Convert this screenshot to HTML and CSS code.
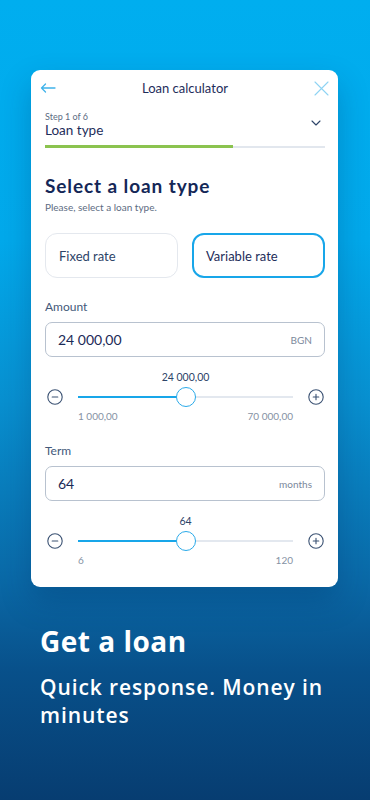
FILE: index.html
```html
<!DOCTYPE html>
<html lang="en">
<head>
    <meta charset="UTF-8">
    <meta name="viewport" content="width=device-width, initial-scale=1.0">
    <title>Loan calculator</title>
    <link rel="stylesheet" href="styles.css">
</head>
<body>
    <div class="card">
        <div class="topbar">
            <svg class="back" width="16" height="10" viewBox="0 0 16 10">
                <path d="M15 5H1.5M5.5 1L1.5 5l4 4" fill="none" stroke="#3fb3ea" stroke-width="1.3" stroke-linecap="round" stroke-linejoin="round"/>
            </svg>
            <span class="title">Loan calculator</span>
            <svg class="close" width="15" height="15" viewBox="0 0 15 15">
                <path d="M1 1l13 13M14 1L1 14" stroke="#8ed3f3" stroke-width="1.1" stroke-linecap="round"/>
            </svg>
        </div>

        <div class="step">
            <div>
                <div class="step-no">Step 1 of 6</div>
                <div class="step-name">Loan type</div>
            </div>
            <svg class="chevron" width="10" height="6" viewBox="0 0 10 6">
                <path d="M1 1l4 4 4-4" fill="none" stroke="#2d4468" stroke-width="1.1" stroke-linecap="round" stroke-linejoin="round"/>
            </svg>
        </div>
        <div class="progress"><div class="progress-fill" style="width: 67%"></div></div>

        <h2 class="heading">Select a loan type</h2>
        <p class="hint">Please, select a loan type.</p>

        <div class="types">
            <div class="type">Fixed rate</div>
            <div class="type active">Variable rate</div>
        </div>

        <div class="field">
            <div class="label">Amount</div>
            <div class="input"><span class="value">24 000,00</span><span class="unit">BGN</span></div>
            <div class="slider">
                <div class="current">24 000,00</div>
                <svg class="minus" width="16" height="16" viewBox="0 0 16 16">
                    <circle cx="8" cy="8" r="7.2" fill="none" stroke="#3b5273" stroke-width="1.1"/>
                    <path d="M5.2 8h5.6" stroke="#3b5273" stroke-width="1.1" stroke-linecap="round"/>
                </svg>
                <div class="track"><div class="fill" style="width: 50%"><span class="thumb"></span></div></div>
                <svg class="plus" width="16" height="16" viewBox="0 0 16 16">
                    <circle cx="8" cy="8" r="7.2" fill="none" stroke="#3b5273" stroke-width="1.1"/>
                    <path d="M5.2 8h5.6M8 5.2v5.6" stroke="#3b5273" stroke-width="1.1" stroke-linecap="round"/>
                </svg>
                <div class="limits"><span>1 000,00</span><span>70 000,00</span></div>
            </div>
        </div>

        <div class="field">
            <div class="label">Term</div>
            <div class="input"><span class="value">64</span><span class="unit">months</span></div>
            <div class="slider">
                <div class="current">64</div>
                <svg class="minus" width="16" height="16" viewBox="0 0 16 16">
                    <circle cx="8" cy="8" r="7.2" fill="none" stroke="#3b5273" stroke-width="1.1"/>
                    <path d="M5.2 8h5.6" stroke="#3b5273" stroke-width="1.1" stroke-linecap="round"/>
                </svg>
                <div class="track"><div class="fill" style="width: 50%"><span class="thumb"></span></div></div>
                <svg class="plus" width="16" height="16" viewBox="0 0 16 16">
                    <circle cx="8" cy="8" r="7.2" fill="none" stroke="#3b5273" stroke-width="1.1"/>
                    <path d="M5.2 8h5.6M8 5.2v5.6" stroke="#3b5273" stroke-width="1.1" stroke-linecap="round"/>
                </svg>
                <div class="limits"><span>6</span><span>120</span></div>
            </div>
        </div>
    </div>

    <div class="promo">
        <h1>Get a loan</h1>
        <p>Quick response. Money in minutes</p>
    </div>
</body>
</html>
```

FILE: styles.css
```css
html, body, h1, h2, p {
    margin: 0;
    padding: 0;
}
html, body {
    width: 100%;
    height: 100%;
}
body {
    font-family: Lato, "Open Sans", sans-serif;
    background: linear-gradient(180deg, #00aeef 0%, #02a9eb 30%, #0890d0 50%, #0a6aa8 72%, #08508a 84%, #073d71 100%);
    padding-top: 70px;
    box-sizing: border-box;
    color: #1b2a57;
}
.card {
    margin: 0 32px 0 31px;
    background: #fff;
    border-radius: 9px;
    padding: 0 13px 20px 14px;
    box-shadow: 0 14px 30px rgba(0, 40, 90, 0.25);
}
.topbar {
    display: flex;
    align-items: center;
    justify-content: space-between;
    height: 36px;
    margin: 0 -4px 0 -5px;
}
.title {
    font-size: 13px;
    color: #1e2d5a;
}
.step {
    display: flex;
    align-items: center;
    justify-content: space-between;
    margin-top: 5px;
    padding-right: 4px;
}
.step-no {
    font-size: 9px;
    line-height: 11px;
    color: #5d6c82;
}
.step-name {
    font-size: 13.5px;
    line-height: 16px;
    color: #1e2d5a;
}
.chevron {
    margin-top: -3px;
}
.progress {
    margin-top: 7px;
    height: 3px;
    background: linear-gradient(180deg, #fff 0, #fff 1px, #e2e7ee 1px);
}
.progress-fill {
    height: 3px;
    background: #8bc34f;
}
.heading {
    margin-top: 26px;
    font-size: 19px;
    line-height: 24px;
    font-weight: 700;
    letter-spacing: 0.9px;
    color: #142757;
}
.hint {
    margin-top: 3px;
    font-size: 10px;
    line-height: 13px;
    color: #5d6c82;
}
.types {
    display: grid;
    grid-template-columns: 1fr 1fr;
    column-gap: 14px;
    margin-top: 19px;
}
.type {
    box-sizing: border-box;
    height: 45px;
    display: flex;
    align-items: center;
    padding-left: 13px;
    border: 1px solid #e4e8ee;
    border-radius: 12px;
    font-size: 13px;
    color: #2d4468;
}
.type.active {
    border: 2px solid #18a6e9;
    padding-left: 12px;
    color: #1e2d5a;
}
.field {
    margin-top: 21px;
}
.field + .field {
    margin-top: 20px;
}
.label {
    font-size: 12px;
    line-height: 16px;
    color: #43597a;
}
.input {
    box-sizing: border-box;
    height: 35px;
    margin-top: 7px;
    display: flex;
    align-items: center;
    justify-content: space-between;
    padding: 0 12px;
    border: 1px solid #b8c2cf;
    border-radius: 7px;
}
.value {
    font-size: 14px;
    color: #1b2a57;
}
.unit {
    font-size: 10px;
    color: #7b889b;
}
.slider {
    display: grid;
    grid-template-columns: 16px 1fr 16px;
    column-gap: 15px;
    align-items: center;
    margin-top: 13px;
    padding: 0 1px 0 2px;
}
.current {
    grid-row: 1;
    grid-column: 2;
    text-align: center;
    font-size: 10.5px;
    line-height: 14px;
    color: #2d4468;
    margin-bottom: 3px;
}
.minus {
    grid-row: 2;
    grid-column: 1;
}
.track {
    grid-row: 2;
    grid-column: 2;
    height: 2px;
    background: #e3e8ef;
    margin: 9px 0;
}
.plus {
    grid-row: 2;
    grid-column: 3;
}
.fill {
    position: relative;
    height: 2px;
    background: #18a6e9;
}
.thumb {
    position: absolute;
    right: -10px;
    top: -9px;
    width: 20px;
    height: 20px;
    box-sizing: border-box;
    border: 1.3px solid #2aaae9;
    border-radius: 50%;
    background: #fff;
}
.limits {
    grid-row: 3;
    grid-column: 2;
    display: flex;
    justify-content: space-between;
    margin-top: 2px;
    font-size: 10px;
    line-height: 14px;
    color: #8692a4;
}
.promo {
    padding: 36px 40px 0;
    color: #fff;
    font-family: "Open Sans", Lato, sans-serif;
}
.promo h1 {
    font-size: 28px;
    line-height: 36px;
    font-weight: 700;
    letter-spacing: 0.5px;
}
.promo p {
    margin-top: 14px;
    font-size: 21px;
    line-height: 28px;
    font-weight: 600;
    letter-spacing: 0.9px;
}
```
